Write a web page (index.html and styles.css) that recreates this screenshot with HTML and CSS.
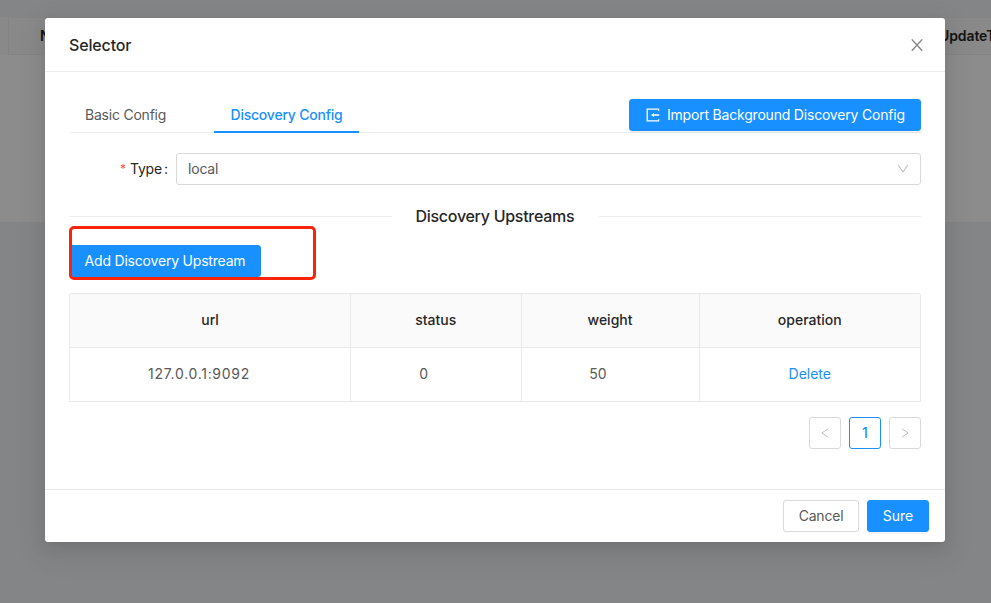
FILE: index.html
```html
<!DOCTYPE html>
<html lang="en">
<head>
<meta charset="utf-8">
<title>Selector</title>
<link rel="stylesheet" href="styles.css">
</head>
<body>
<div class="page">
  <div class="page-card">
    <div class="page-head"><span class="col-name">N</span><span class="col-time">UpdateTime</span></div>
  </div>
</div>
<div class="mask">
  <section class="modal" role="dialog">
    <header class="modal-head">
      <h1>Selector</h1>
      <svg class="close" viewBox="0 0 14 14"><path d="M1.8 1.4 12.2 12.8M12.2 1.4 1.8 12.8"/></svg>
    </header>
    <div class="modal-body">
      <nav class="tabs">
        <span class="tab">Basic Config</span>
        <span class="tab tab-active">Discovery Config</span>
        <button class="btn btn-primary import">
          <svg viewBox="0 0 14 14"><path d="M12.6 2.8V1.2H1.2v11.6h11.4v-1.6M6.8 7H13.2"/><path class="solid" d="M5 7l3-2v4z"/></svg>
          <span class="import-text">Import Background Discovery Config</span>
        </button>
      </nav>
      <div class="field">
        <label><i>*</i><span>Type</span><b>:</b></label>
        <div class="select"><span>local</span><svg viewBox="0 0 12 12"><path d="M1.2 2 6 8.8 10.8 2"/></svg></div>
      </div>
      <div class="divider"><span>Discovery Upstreams</span></div>
      <div class="add-row">
        <button class="btn btn-primary add">Add Discovery Upstream</button>
        <div class="highlight"></div>
      </div>
      <div class="table">
        <div class="row row-head"><div>url</div><div>status</div><div>weight</div><div>operation</div></div>
        <div class="row"><div class="editable address">127.0.0.1:9092</div><div class="editable">0</div><div class="editable">50</div><div><a>Delete</a></div></div>
      </div>
      <div class="pager">
        <span class="page-item"><svg viewBox="0 0 12 12"><path d="M9.2 1.8 2.8 6l6.4 4.2"/></svg></span>
        <span class="page-item page-current">1</span>
        <span class="page-item"><svg viewBox="0 0 12 12"><path d="M2.8 1.8 9.2 6l-6.4 4.2"/></svg></span>
      </div>
    </div>
    <footer class="modal-foot">
      <button class="btn cancel">Cancel</button>
      <button class="btn btn-primary sure">Sure</button>
    </footer>
  </section>
</div>
</body>
</html>
```
FILE: styles.css
```css
* { box-sizing: border-box; }
body {
  margin: 0;
  height: 603px;
  overflow: hidden;
  position: relative;
  background: #f0f2f5;
  font: 14px/22px Inter, "Liberation Sans", sans-serif;
  color: #595959;
}
.page { padding-top: 17px; }
.page-card { height: 205px; background: #fff; }
.page-head {
  display: flex;
  justify-content: space-between;
  align-items: center;
  height: 38px;
  margin-left: 8px;
  padding-left: 31px;
  border: 1px solid #f0f0f0;
  border-right: 0;
  background: #fafafa;
  box-shadow: -8px 0 #fafafa;
  color: #262626;
  font-weight: 600;
}
.col-time { width: 52px; white-space: nowrap; letter-spacing: -.1px; }
.mask {
  position: absolute;
  inset: 0;
  padding: 18px 0 0 45px;
  background: rgba(0, 0, 0, .45);
}
.modal {
  display: flex;
  flex-direction: column;
  width: 900px;
  height: 524px;
  border-radius: 3px;
  background: #fff;
  box-shadow: 0 3px 6px -4px rgba(0,0,0,.12), 0 6px 16px rgba(0,0,0,.08), 0 9px 28px 8px rgba(0,0,0,.05);
}
.modal-head {
  display: flex;
  align-items: center;
  justify-content: space-between;
  height: 54px;
  padding: 0 21px 0 24px;
  border-bottom: 1px solid #ececec;
}
h1 { margin: 0; font-size: 16px; font-weight: 500; color: #262626; letter-spacing: -.15px; }
svg { display: block; fill: none; stroke: currentColor; }
.close { width: 14px; height: 14px; color: #858585; stroke-width: 1.4; margin-top: 1px; }
.modal-body { flex: 1; padding: 27px 24px 0; }
.tabs {
  display: flex;
  height: 34px;
  border-bottom: 1px solid #eee;
}
.tab { padding: 5px 16px 0; width: 113px; height: 34px; white-space: nowrap; letter-spacing: -.22px; }
.tab-active {
  width: 145px;
  margin-left: 32px;
  padding-left: 16.5px;
  border-bottom: 2px solid #1890ff;
  color: #1890ff;
  font-weight: 500;
}
.btn {
  height: 32px;
  padding: 0;
  border: 1px solid #d9d9d9;
  border-radius: 3px;
  background: #fff;
  color: #595959;
  font: inherit;
  white-space: nowrap;
}
.btn-primary { border-color: #1890ff; background: #1890ff; color: #fff; box-shadow: 0 2px 0 rgba(0,0,0,.045); }
.import {
  display: flex;
  align-items: center;
  width: 292px;
  margin-left: auto;
  padding-left: 16px;
  letter-spacing: -.2px;
}
.import svg { width: 14px; height: 14px; margin-right: 7px; stroke-width: 1.3; }
.solid { fill: currentColor; stroke: none; }
.field { display: flex; margin-top: 20px; height: 32px; align-items: center; }
label { display: flex; justify-content: flex-end; width: 107px; padding-right: 8px; color: #262626; }
label span { letter-spacing: -.2px; }
label i { margin: 0 4px 0 0; color: #ff4d4f; font-size: 12px; font-style: normal; }
label b { margin-left: 2px; font-weight: 400; }
.select {
  display: flex;
  flex: 1;
  align-items: center;
  justify-content: space-between;
  height: 32px;
  padding: 0 11px;
  border: 1px solid #d9d9d9;
  border-radius: 3px;
  letter-spacing: -.2px;
}
.select svg { width: 12px; height: 12px; color: #bfbfbf; stroke-width: 1.1; }
.divider {
  display: flex;
  align-items: center;
  gap: 24px;
  height: 24px;
  margin-top: 19px;
  color: #262626;
  font-size: 16px;
  font-weight: 500;
  letter-spacing: -.28px;
}
.divider::before, .divider::after { content: ""; flex: 1; height: 1px; background: #eee; }
.divider span { width: 159px; white-space: nowrap; }
.add-row { position: relative; margin-top: 17px; height: 32px; }
.add { display: block; width: 192px; letter-spacing: -.2px; }
.highlight {
  position: absolute;
  left: 0;
  top: -19px;
  width: 247px;
  height: 54px;
  border: 3px solid #fb230a;
  border-radius: 5px;
}
.table { margin-top: 16px; border: 1px solid #e9e9e9; border-bottom: 0; border-radius: 3px 3px 0 0; }
.row { display: grid; grid-template-columns: 281px 170.5px 178px 1fr; height: 54px; }
.row > div {
  display: flex;
  align-items: center;
  justify-content: center;
  padding-bottom: 2px;
  border-right: 1px solid #e9e9e9;
  border-bottom: 1px solid #e9e9e9;
}
.row > div:last-child { border-right: 0; }
.row-head { background: #fafafa; color: #262626; font-weight: 500; }
.row > .editable { padding-right: 24px; }
.row > .address { padding-right: 22px; letter-spacing: .7px; }
.row a { color: #1890ff; }
.pager { display: flex; justify-content: flex-end; gap: 8px; margin-top: 15px; }
.page-item {
  display: flex;
  align-items: center;
  justify-content: center;
  width: 32px;
  height: 32px;
  border: 1px solid #d9d9d9;
  border-radius: 3px;
  color: #bfbfbf;
}
.page-item svg { width: 12px; height: 12px; }
.page-current { border-color: #1890ff; color: #1890ff; font-weight: 500; }
.modal-foot {
  display: flex;
  justify-content: flex-end;
  gap: 8px;
  height: 53px;
  padding: 10px 16px 0;
  border-top: 1px solid #ececec;
}
.cancel { width: 76px; letter-spacing: -.2px; }
.sure { width: 62px; }
```
